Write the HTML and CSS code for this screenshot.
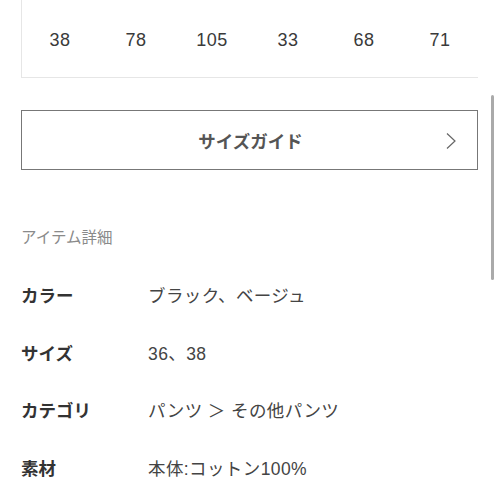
FILE: index.html
```html
<!DOCTYPE html>
<html lang="ja">
<head>
    <meta charset="UTF-8">
    <meta name="viewport" content="width=device-width, initial-scale=1.0">
    <title>アイテム詳細</title>
    <link rel="stylesheet" href="styles.css">
</head>
<body>
    <div class="page">
        <div class="size-table">
            <div class="size-row">
                <span>38</span>
                <span>78</span>
                <span>105</span>
                <span>33</span>
                <span>68</span>
                <span>71</span>
            </div>
        </div>

        <a class="guide-btn" href="#">
            <span class="guide-label">サイズガイド</span>
            <svg class="chevron" width="12" height="18" viewBox="0 0 12 18">
                <path d="M2 1.5 L10 9 L2 16.5" fill="none" stroke="#666" stroke-width="1.2"/>
            </svg>
        </a>

        <h3 class="section-title">アイテム詳細</h3>
        <dl class="details">
            <div class="detail-row">
                <dt>カラー</dt>
                <dd>ブラック、ベージュ</dd>
            </div>
            <div class="detail-row">
                <dt>サイズ</dt>
                <dd>36、38</dd>
            </div>
            <div class="detail-row">
                <dt>カテゴリ</dt>
                <dd>パンツ ＞ その他パンツ</dd>
            </div>
            <div class="detail-row">
                <dt>素材</dt>
                <dd>本体:コットン100%</dd>
            </div>
        </dl>
    </div>
    <div class="scrollbar"></div>
</body>
</html>
```

FILE: styles.css
```css
body {
    margin: 0;
    background: #fff;
    font-family: "Liberation Sans", "Noto Sans CJK JP", sans-serif;
    color: #333;
    overflow: hidden;
}
.page {
    padding: 0 22px 0 21px;
}
.size-table {
    border-left: 1px solid #e6e6e6;
    border-bottom: 1px solid #e6e6e6;
    height: 78px;
    box-sizing: border-box;
}
.size-row {
    display: grid;
    grid-template-columns: repeat(6, 1fr);
    padding-top: 28px;
    font-size: 18px;
    line-height: 24px;
    letter-spacing: 0.5px;
    text-align: center;
    color: #3a3a3a;
}
.guide-btn {
    display: flex;
    align-items: center;
    justify-content: center;
    position: relative;
    margin-top: 32px;
    height: 60px;
    box-sizing: border-box;
    border: 1px solid #777;
    text-decoration: none;
    color: #555;
}
.guide-label {
    font-family: "Noto Sans CJK JP", sans-serif;
    font-weight: bold;
    font-size: 17.5px;
    margin-left: 2px;
}
.chevron {
    position: absolute;
    right: 20px;
    top: 21px;
}
.section-title {
    margin: 56px 0 0 0;
    font-family: "Noto Sans CJK JP", sans-serif;
    font-weight: normal;
    font-size: 15.5px;
    line-height: 20px;
    color: #8a8a8a;
}
.details {
    margin: 20px 0 0 0;
}
.detail-row {
    display: flex;
    align-items: center;
    height: 57.5px;
    font-family: "Noto Sans CJK JP", sans-serif;
    font-size: 17.5px;
}
.detail-row dt {
    width: 127px;
    font-weight: bold;
    color: #333;
}
.detail-row dd {
    margin: 0;
    color: #444;
    letter-spacing: 0.4px;
    font-family: "Liberation Sans", "Noto Sans CJK JP", sans-serif;
}
.scrollbar {
    position: absolute;
    left: 491px;
    top: 95px;
    width: 3px;
    height: 185px;
    border-radius: 2px;
    background: #aaa;
}
```
